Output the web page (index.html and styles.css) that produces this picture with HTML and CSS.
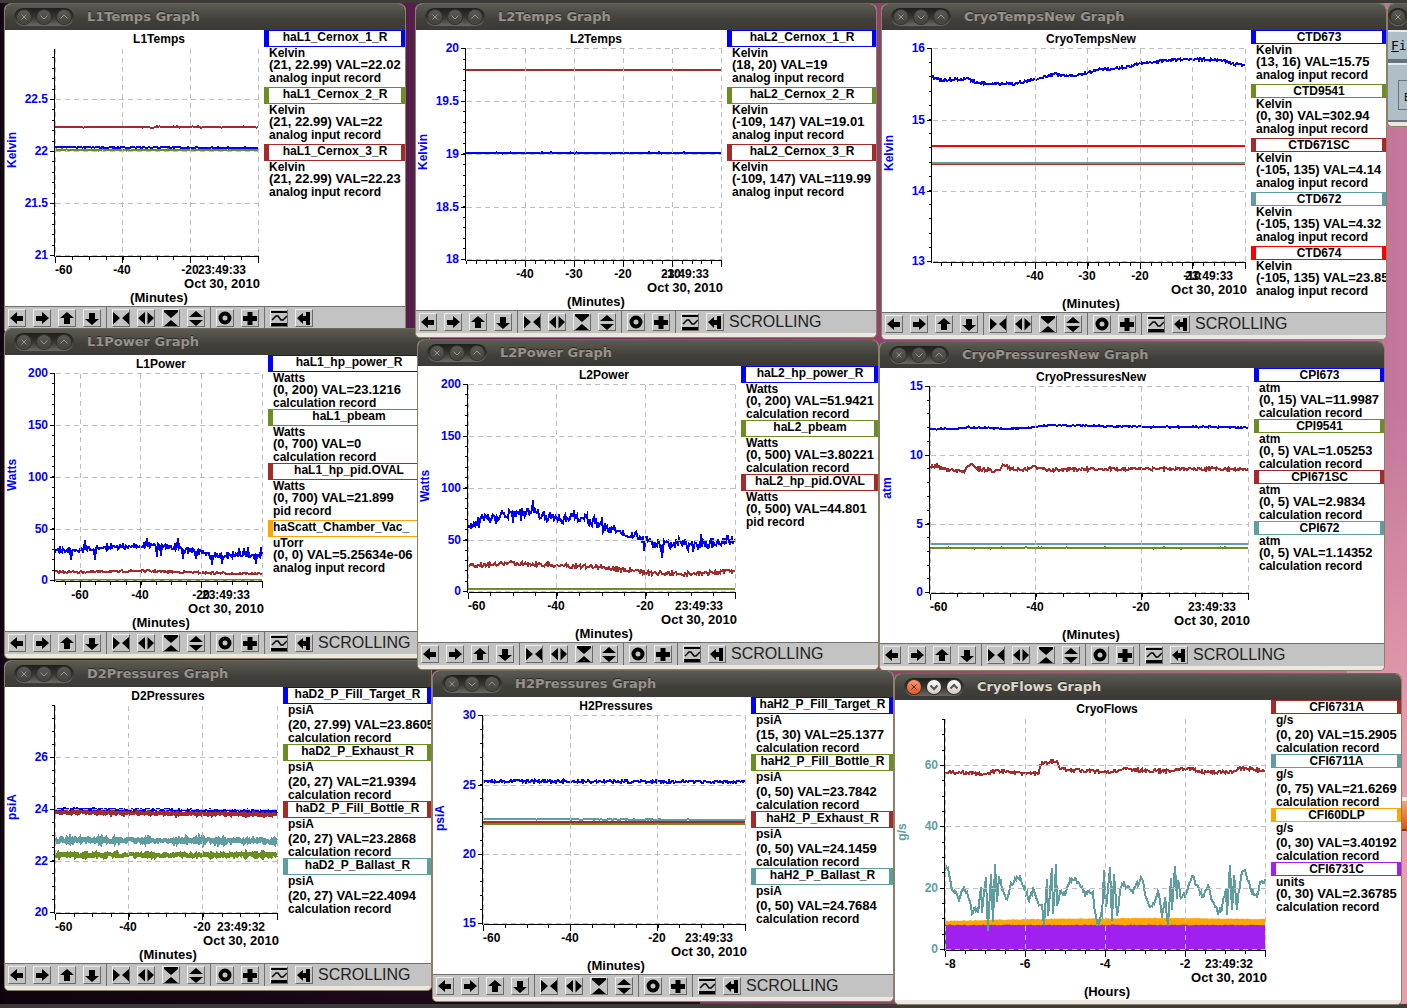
FILE: index.html
```html
<!DOCTYPE html>
<html lang="en">
<head>
<meta charset="utf-8">
<title>Cryo target strip charts</title>
<link rel="stylesheet" href="styles.css">
</head>
<body>
<svg class="sprite" aria-hidden="true">
  <symbol id="i-left" viewBox="1 1 16 16"><path d="M2 9L9 3V7H15V12H9V15Z"/></symbol>
  <symbol id="i-right" viewBox="1 1 16 16"><path d="M16 9L9 3V7H3V12H9V15Z"/></symbol>
  <symbol id="i-up" viewBox="1 1 16 16"><path d="M9 3L16 9H12V15H6V9H2Z"/></symbol>
  <symbol id="i-down" viewBox="1 1 16 16"><path d="M9 16L16 10H12V4H6V10H2Z"/></symbol>
  <symbol id="i-hin" viewBox="1 1 16 16"><path d="M1 3V15.500L8 9ZM17 3V15.500L10 9Z"/></symbol>
  <symbol id="i-hout" viewBox="1 1 16 16"><path d="M8 3V15.500L1 9ZM10.500 3V15.500L17 9Z"/></symbol>
  <symbol id="i-vin" viewBox="1 1 16 16"><path d="M2 1H16V3L9 9L2 3ZM2 17L9 11L16 17Z"/></symbol>
  <symbol id="i-vout" viewBox="1 1 16 16"><path d="M9 2L16 8H2ZM2 11H16L9 17Z"/></symbol>
  <symbol id="i-ring" viewBox="1 1 16 16"><circle cx="9" cy="9" r="4.500" fill="none" stroke="#000" stroke-width="4"/></symbol>
  <symbol id="i-plus" viewBox="1 1 16 16"><path d="M6.500 3h5v4h4.500v5h-4.500v4h-5v-4H2V7h4.500Z"/></symbol>
  <symbol id="i-wave" viewBox="1 1 16 16"><path d="M1 2H17V4H1ZM1 14H17V17H1Z"/><path d="M2 11L6 7H8L11 11H13L17 7" fill="none" stroke="#000" stroke-width="1.500"/></symbol>
  <symbol id="i-end" viewBox="1 1 16 16"><path d="M2 9L8 4V7H11V3H15V16H11V12H8V15Z"/></symbol>
  <symbol id="w-close" viewBox="0 0 14 14"><path d="M4.500 4.500L9.500 9.500M9.500 4.500L4.500 9.500"/></symbol>
  <symbol id="w-min" viewBox="0 0 14 14"><path d="M3.500 5.500L7 9L10.500 5.500"/></symbol>
  <symbol id="w-max" viewBox="0 0 14 14"><path d="M3.500 8.500L7 5L10.500 8.500"/></symbol>
</svg>
<main class="desktop" id="desktop">
  <div class="panel panel-top"></div>
  <div class="panel panel-bottom"></div>
  <div class="launcher"></div>
  <section class="window side">
    <header class="titlebar">
      <div class="controls">
        <button class="ctl" type="button" aria-label="Close"><svg><use href="#w-close"/></svg></button>
      </div>
    </header>
    <div class="menubar"><u>F</u>i</div>
    <div class="sidebody"><button class="sidebtn" type="button">E</button></div>
  </section>
</main>
<script src="charts.js"></script>
</body>
</html>
```
FILE: styles.css
```css
* { box-sizing: border-box; }

body {
  margin: 0;
  overflow: hidden;
  font: bold 12px/13px "Liberation Sans", Arial, sans-serif;
  color: #000;
}

.sprite { position: absolute; width: 0; height: 0; }

.desktop {
  position: relative;
  min-height: 100vh;
  overflow: hidden;
  background:
    linear-gradient(180deg, transparent 70%, rgba(10, 2, 10, 0.8) 100%) 0 0 / 700px 100% no-repeat,
    linear-gradient(180deg, transparent 40%, rgba(245, 175, 180, 0.7) 75%) 100% 0 / 60px 100% no-repeat,
    linear-gradient(90deg, #0d040c 0, #1d0a1c 5px, #561f4b 410px, #8c4468 880px, #c5789c 100%);
}

.panel { position: absolute; left: 0; right: 0; background: #3c3b37; }
.panel-top { top: 0; height: 3px; }
.panel-bottom { bottom: 0; height: 4px; }

.launcher {
  position: absolute;
  right: 0;
  top: 797px;
  width: 8px;
  height: 34px;
  border-top: 4px solid #f3eeee;
  border-bottom: 2px solid #8a3208;
  background: linear-gradient(#f0a878, #dd5310);
}

.window {
  position: absolute;
  border: 1px solid #8a8068;
  border-top-color: #6b685d;
  border-radius: 7px 7px 5px 5px;
  background: #ece8df;
  padding-bottom: 4px;
  overflow: hidden;
}

.l1temps { left: 4px; top: 3px; width: 402px; }
.l2temps { left: 415px; top: 3px; width: 462px; }
.cryotemps { left: 881px; top: 3px; width: 506px; }
.l1power { left: 4px; top: 328px; width: 426px; }
.l2power { left: 417px; top: 339px; width: 462px; }
.cryopress { left: 879px; top: 341px; width: 506px; }
.d2press { left: 4px; top: 660px; width: 428px; }
.h2press { left: 432px; top: 670px; width: 462px; }
.cryoflows { left: 894px; top: 673px; width: 508px; }
.side { left: 1387px; top: 3px; width: 200px; }

.titlebar {
  display: flex;
  align-items: center;
  gap: 13px;
  height: 26px;
  padding-left: 9px;
  background: linear-gradient(#5c5b53, #403f3a 60%, #3b3a36);
}

.side .titlebar { padding-left: 0; }

.title {
  margin: 0;
  font: bold 13px/18px "DejaVu Sans", sans-serif;
  color: #97928a;
  text-shadow: 0 -1px #2a2926;
  white-space: nowrap;
}

.controls {
  display: flex;
  flex: none;
  align-items: center;
  gap: 6px;
  height: 18px;
  padding: 0 3px;
  border-radius: 9px;
  background: linear-gradient(#1f1e1c, #35342f 50%, #6b6a62);
}

.ctl {
  width: 14px;
  height: 14px;
  padding: 0;
  border: 0;
  border-radius: 7px;
  background: linear-gradient(#5b5a54, #43423d);
  box-shadow: 0 0 0 1px #33322e;
}

.ctl svg { display: block; width: 14px; height: 14px; fill: none; stroke: #9a968c; }

.active .title { color: #dfd8c8; }
.active .ctl { background: linear-gradient(#ffffff, #cfcbc2); }
.active .ctl svg { stroke: #55534c; stroke-width: 2; }
.active .ctl:first-child { background: linear-gradient(#f79a72, #e2582a); }
.active .ctl:first-child svg { stroke: #5a2410; stroke-width: 1; }

.content { display: flex; background: #fff; }

.chart { display: block; flex: 1; min-width: 0; height: auto; }
.chart text { font: bold 12px "Liberation Sans", Arial, sans-serif; }
.chart .wide { font-size: 13px; }
.grid { fill: none; stroke: #bebebe; stroke-dasharray: 5 4; shape-rendering: crispEdges; }
.axis { fill: none; stroke: #000; shape-rendering: crispEdges; }
.trace { fill: none; stroke-width: 2; shape-rendering: crispEdges; }
.thick { stroke-width: 4; }

.legend { flex: none; margin: 0; padding: 0; list-style: none; overflow: hidden; white-space: nowrap; }
.w130 { width: 130px; }
.w135 { width: 135px; }
.w137 { width: 137px; }
.w141 { width: 141px; }
.w142 { width: 142px; }
.w148 { width: 148px; }
.w149 { width: 149px; }
.w161 { width: 161px; }

.entry { padding-bottom: 1px; }

.name {
  border: 1px solid;
  border-left-width: 5px;
  border-right-width: 4px;
  text-align: center;
}

.name.start { text-align: left; }
.name span { color: #000; }
.line { height: 11px; padding-left: 5px; }
.name.line { height: 14px; padding-left: 0; }
.line.deep { height: 14px; }
.name.line.deep { height: 17px; }
.line.value { font-size: 13px; }

.blue { border-color: #0000ff; stroke: #0000ff; }
.olive { border-color: #6b8e23; stroke: #6b8e23; }
.brown { border-color: #a52a2a; stroke: #a52a2a; }
.teal { border-color: #5f9ea0; stroke: #5f9ea0; }
.red { border-color: #ff0000; stroke: #ff0000; }
.orange { border-color: #ffa500; stroke: #ffa500; }
.purple { border-color: #a020f0; stroke: #a020f0; }

.toolbar {
  display: flex;
  align-items: center;
  gap: 5px;
  height: 23px;
  padding-left: 3px;
  border-top: 1px solid #6f6f6f;
  background: #c3c3c3;
}

.group { display: flex; gap: 7px; }
.sep { width: 1px; height: 100%; background: #6f6f6f; }

.tool {
  width: 18px;
  height: 18px;
  padding: 0;
  border: 1px solid;
  border-color: #eeeeee #6a6a6a #6a6a6a #eeeeee;
  background: #c3c3c3;
}

.tool svg { display: block; width: 16px; height: 16px; }
.mode { font-size: 16px; font-weight: normal; line-height: 18px; color: #222; }

.menubar {
  height: 33px;
  padding: 7px 3px;
  border-top: 2px solid #e4ebee;
  border-bottom: 4px solid #66737c;
  background: #aebfc8;
  font: 13px/14px "DejaVu Sans Mono", monospace;
}

.sidebody {
  height: 59px;
  padding: 15px 10px;
  border-top: 2px solid #e4ebee;
  border-bottom: 2px solid #66737c;
  background: #aebfc8;
}

.sidebtn {
  width: 60px;
  height: 30px;
  padding: 6px 5px 0;
  border: 1px solid #66737c;
  background: #aebfc8;
  font: 10px/12px "DejaVu Sans Mono", monospace;
  text-align: left;
}
```
FILE: charts.js
```js
// Each chart is drawn in desktop coordinates; "view" is the part of the desktop it covers.
// x / y: major ticks as [position, label]; xm / ym: minor ticks per major step.
// traces: [color, jitter, points, spike height, extra class].
const charts = [
  {
    id: 'l1temps', name: 'L1Temps', view: [5, 30, 259, 276], plot: [55, 48, 258, 256],
    unit: 'Kelvin', time: '23:49:33', span: '(Minutes)', mode: '', legend: 'w141',
    x: [[55, '-60'], [122, '-40'], [190, '-20'], [258, '']], xm: 4,
    y: [[99, '22.5'], [151, '22'], [203, '21.5'], [255, '21']], ym: 5,
    traces: [['brown', 0.6, '55 127 258 127'], ['olive', 0.6, '55 150 258 150'], ['blue', 0.6, '55 147 258 148']],
    entries: [['blue', 'haL1_Cernox_1_R', 'Kelvin', '(21, 22.99) VAL=22.02', 'analog input record'],
      ['olive', 'haL1_Cernox_2_R', 'Kelvin', '(21, 22.99) VAL=22', 'analog input record'],
      ['brown', 'haL1_Cernox_3_R', 'Kelvin', '(21, 22.99) VAL=22.23', 'analog input record']]
  },
  {
    id: 'l1power', name: 'L1Power', view: [5, 355, 263, 276], plot: [55, 373, 262, 581],
    unit: 'Watts', time: '23:49:33', span: '(Minutes)', mode: 'SCROLLING', legend: 'w161',
    x: [[80, '-60'], [140, '-40'], [201, '-20'], [262, '']], xm: 4,
    y: [[373, '200'], [425, '150'], [477, '100'], [529, '50'], [580, '0']], ym: 5,
    traces: [['olive', 0, '55 580 262 580'],
      ['brown', 1, '55 572 85 572 140 571 180 572 215 573 262 574'],
      ['blue', 2, '55 551 85 549 100 548 123 547 153 545 170 547 193 551 213 555 262 556', 11]],
    entries: [['blue', 'haL1_hp_power_R', 'Watts', '(0, 200) VAL=23.1216', 'calculation record'],
      ['olive', 'haL1_pbeam', 'Watts', '(0, 700) VAL=0', 'calculation record'],
      ['brown', 'haL1_hp_pid.OVAL', 'Watts', '(0, 700) VAL=21.899', 'pid record'],
      ['orange', 'haScatt_Chamber_Vac_', 'uTorr', '(0, 0) VAL=5.25634e-06', 'analog input record', 'start']]
  },
  {
    id: 'l2temps', name: 'L2Temps', view: [416, 30, 311, 280], plot: [466, 48, 721, 260],
    unit: 'Kelvin', time: '23:49:33', span: '(Minutes)', mode: 'SCROLLING', legend: 'w149',
    x: [[525, '-40'], [574, '-30'], [623, '-20'], [672, '-10'], [721, '']], xm: 5,
    y: [[48, '20'], [101, '19.5'], [154, '19'], [207, '18.5'], [259, '18']], ym: 5,
    traces: [['brown', 0, '466 70 721 70'], ['olive', 0.5, '494 153 721 153'], ['blue', 0.6, '466 153 721 153']],
    entries: [['blue', 'haL2_Cernox_1_R', 'Kelvin', '(18, 20) VAL=19', 'analog input record'],
      ['olive', 'haL2_Cernox_2_R', 'Kelvin', '(-109, 147) VAL=19.01', 'analog input record'],
      ['brown', 'haL2_Cernox_3_R', 'Kelvin', '(-109, 147) VAL=119.99', 'analog input record']]
  },
  {
    id: 'd2press', name: 'D2Pressures', view: [5, 687, 278, 276], plot: [55, 705, 277, 913],
    unit: 'psiA', time: '23:49:32', span: '(Minutes)', mode: 'SCROLLING', legend: 'w148',
    x: [[55, '-60'], [128, '-40'], [202, '-20'], [277, '']], xm: 4,
    y: [[757, '26'], [809, '24'], [861, '22'], [912, '20']], ym: 4,
    traces: [['brown', 1.2, '55 812 277 814', 0, 'thick'], ['blue', 1, '55 809 277 811'],
      ['teal', 1.8, '55 840 277 841', 0, 'thick'], ['olive', 1.4, '55 855 277 855', 0, 'thick']],
    entries: [['blue', 'haD2_P_Fill_Target_R', 'psiA', '(20, 27.99) VAL=23.8605', 'calculation record'],
      ['olive', 'haD2_P_Exhaust_R', 'psiA', '(20, 27) VAL=21.9394', 'calculation record'],
      ['brown', 'haD2_P_Fill_Bottle_R', 'psiA', '(20, 27) VAL=23.2868', 'calculation record'],
      ['teal', 'haD2_P_Ballast_R', 'psiA', '(20, 27) VAL=22.4094', 'calculation record']]
  },
  {
    id: 'l2power', name: 'L2Power', view: [418, 366, 323, 276], plot: [468, 384, 735, 592],
    unit: 'Watts', time: '23:49:33', span: '(Minutes)', mode: 'SCROLLING', legend: 'w137',
    x: [[468, '-60'], [556, '-40'], [645, '-20'], [735, '']], xm: 4,
    y: [[384, '200'], [436, '150'], [488, '100'], [540, '50'], [591, '0']], ym: 5,
    traces: [['olive', 0, '468 589 735 589'],
      ['brown', 2, '468 566 513 563 550 565 600 567 650 573 690 574 735 571'],
      ['blue', 5, '468 525 482 520 497 518 513 512 532 513 533 496 534 513 553 518 590 520 603 527 627 532 643 540 657 545 697 545 735 539', 8]],
    entries: [['blue', 'haL2_hp_power_R', 'Watts', '(0, 200) VAL=51.9421', 'calculation record'],
      ['olive', 'haL2_pbeam', 'Watts', '(0, 500) VAL=3.80221', 'calculation record'],
      ['brown', 'haL2_hp_pid.OVAL', 'Watts', '(0, 500) VAL=44.801', 'pid record']]
  },
  {
    id: 'cryotemps', name: 'CryoTempsNew', view: [882, 30, 369, 282], plot: [932, 48, 1245, 262],
    unit: 'Kelvin', time: '23:49:33', span: '(Minutes)', mode: 'SCROLLING', legend: 'w135',
    x: [[1035, '-40'], [1087, '-30'], [1140, '-20'], [1192, '-10'], [1245, '']], xm: 5,
    y: [[48, '16'], [120, '15'], [191, '14'], [261, '13']], ym: 5,
    traces: [['red', 0, '932 146 1245 146'], ['brown', 0, '932 164 1245 164'], ['teal', 0, '932 163 1245 163'],
      ['blue', 1.3, '932 77 940 80 969 79 977 83 1012 84 1031 80 1055 74 1067 76 1082 74 1101 69 1113 69 1131 66 1140 63 1163 61 1184 59 1224 60 1231 64 1245 65']],
    entries: [['blue', 'CTD673', 'Kelvin', '(13, 16) VAL=15.75', 'analog input record'],
      ['olive', 'CTD9541', 'Kelvin', '(0, 30) VAL=302.94', 'analog input record'],
      ['brown', 'CTD671SC', 'Kelvin', '(-105, 135) VAL=4.14', 'analog input record'],
      ['teal', 'CTD672', 'Kelvin', '(-105, 135) VAL=4.32', 'analog input record'],
      ['red', 'CTD674', 'Kelvin', '(-105, 135) VAL=23.85', 'analog input record']]
  },
  {
    id: 'cryopress', name: 'CryoPressuresNew', view: [880, 368, 374, 275], plot: [930, 386, 1248, 593],
    unit: 'atm', time: '23:49:33', span: '(Minutes)', mode: 'SCROLLING', legend: 'w130',
    x: [[930, '-60'], [1035, '-40'], [1141, '-20'], [1248, '']], xm: 4,
    y: [[386, '15'], [455, '10'], [524, '5'], [592, '0']], ym: 5,
    traces: [['olive', 0.6, '930 548 1248 548'], ['teal', 0.3, '930 544 1248 544'],
      ['brown', 1.6, '930 467 938 466 946 470 964 471 970 464 978 469 997 471 1004 465 1012 469 1024 470 1033 467 1048 470 1100 469 1248 469'],
      ['blue', 0.7, '930 429 958 429 967 427 1010 429 1035 427 1051 425 1100 426 1150 427 1225 427 1248 428']],
    entries: [['blue', 'CPI673', 'atm', '(0, 15) VAL=11.9987', 'calculation record'],
      ['olive', 'CPI9541', 'atm', '(0, 5) VAL=1.05253', 'calculation record'],
      ['brown', 'CPI671SC', 'atm', '(0, 5) VAL=2.9834', 'calculation record'],
      ['teal', 'CPI672', 'atm', '(0, 5) VAL=1.14352', 'calculation record']]
  },
  {
    id: 'h2press', name: 'H2Pressures', view: [433, 697, 318, 277], plot: [483, 715, 745, 924],
    unit: 'psiA', time: '23:49:33', span: '(Minutes)', mode: 'SCROLLING', legend: 'w142',
    x: [[483, '-60'], [570, '-40'], [657, '-20'], [745, '']], xm: 4,
    y: [[715, '30'], [785, '25'], [854, '20'], [923, '15']], ym: 5,
    traces: [['olive', 0.4, '483 824 745 824'], ['teal', 0.4, '483 819 745 820'], ['brown', 0, '483 822 745 822'],
      ['blue', 1.4, '483 781 745 782']],
    entries: [['blue', 'haH2_P_Fill_Target_R', 'psiA', '(15, 30) VAL=25.1377', 'calculation record'],
      ['olive', 'haH2_P_Fill_Bottle_R', 'psiA', '(0, 50) VAL=23.7842', 'calculation record'],
      ['brown', 'haH2_P_Exhaust_R', 'psiA', '(0, 50) VAL=24.1459', 'calculation record'],
      ['teal', 'haH2_P_Ballast_R', 'psiA', '(0, 50) VAL=24.7684', 'calculation record']]
  },
  {
    id: 'cryoflows', name: 'CryoFlows', active: true, view: [895, 700, 376, 300], plot: [945, 718, 1265, 950],
    unit: 'g/s', time: '23:49:32', span: '(Hours)', mode: null, legend: 'w130', ink: '#5f9ea0',
    x: [[945, '-8'], [1025, '-6'], [1105, '-4'], [1185, '-2'], [1265, '']], xm: 4,
    y: [[765, '60'], [826, '40'], [888, '20'], [949, '0']], ym: 4,
    fills: [['#ffa500', '945 921 985 920 1040 919 1150 918 1265 919'], ['#a020f0', '945 925 1265 925']],
    traces: [
      ['brown', 1.6, '945 772 985 774 995 771 1018 773 1039 773 1040 764 1051 761 1058 762 1060 769 1085 771 1112 772 1123 769 1152 771 1172 771 1185 768 1205 772 1232 772 1242 768 1265 771'],
      ['teal', 3, '945 868 948 867 952 887 959 900 963 887 968 895 972 912 977 907 978 915 981 885 982 912 986 880 988 928 991 877 993 920 995 867 997 902 999 878 1002 887 1007 900 1011 885 1018 875 1023 883 1027 895 1030 900 1033 888 1039 907 1042 903 1044 925 1047 878 1048 918 1052 868 1053 913 1056 865 1057 908 1060 892 1065 895 1072 877 1080 883 1085 893 1093 893 1095 915 1098 923 1102 915 1104 872 1106 908 1110 867 1112 923 1114 872 1117 917 1120 892 1123 883 1132 892 1142 877 1147 902 1150 907 1154 903 1159 892 1162 918 1165 898 1168 927 1171 878 1172 913 1175 863 1177 898 1178 878 1181 900 1187 892 1192 875 1197 887 1203 898 1208 887 1213 902 1218 912 1222 907 1226 888 1227 913 1230 865 1232 913 1234 877 1237 907 1238 895 1242 872 1246 872 1250 888 1256 897 1260 885 1265 879']],
    entries: [['brown', 'CFI6731A', 'g/s', '(0, 20) VAL=15.2905', 'calculation record'],
      ['teal', 'CFI6711A', 'g/s', '(0, 75) VAL=21.6269', 'calculation record'],
      ['orange', 'CFI60DLP', 'g/s', '(0, 30) VAL=3.40192', 'calculation record'],
      ['purple', 'CFI6731C', 'units', '(0, 30) VAL=2.36785', 'calculation record']]
  }
];

const tools = [
  [['left', 'Scroll left'], ['right', 'Scroll right'], ['up', 'Scroll up'], ['down', 'Scroll down']],
  [['hin', 'Shrink time'], ['hout', 'Expand time'], ['vin', 'Shrink range'], ['vout', 'Expand range']],
  [['ring', 'Reset'], ['plus', 'Refresh']],
  [['wave', 'Autoscale'], ['end', 'Jump to now']]
];

let seed = 7;
function random() {
  seed = (seed * 16807) % 2147483647;
  return seed / 2147483647;
}

function pairs(text) {
  const n = text.split(' ').map(Number);
  return n.reduce((out, v, i) => (i % 2 ? out : [...out, [v, n[i + 1]]]), []);
}

// One sample for each pixel column, with jitter and occasional spikes.
function sample(text, jitter, spike) {
  const p = pairs(text);
  const out = [];
  for (let i = 0; i < p.length - 1; i++) {
    const [x0, y0] = p[i];
    const [x1, y1] = p[i + 1];
    for (let x = x0; x < x1; x++) {
      let y = y0 + (y1 - y0) * (x - x0) / (x1 - x0) + (random() - 0.5) * 2 * jitter;
      if (spike && random() < 0.16) y += (random() - 0.5) * 2 * spike;
      out.push(x + ',' + y.toFixed(1));
    }
  }
  out.push(p[p.length - 1].join(','));
  return out.join(' ');
}

// Minor tick positions, continued from the major ticks to both plot ends.
function minors(major, per, from, to) {
  const step = (major[major.length - 1][0] - major[0][0]) / (major.length - 1) / per;
  const out = [];
  for (let v = major[major.length - 1][0]; v >= from; v -= step) if (v <= to) out.push(Math.round(v));
  return out;
}

function chart(c) {
  const [l, t, r, b] = c.plot;
  const [vx, vy] = c.view;
  const ink = c.ink || '#0000ff';
  const mid = Math.round((l + r) / 2) + 2;
  const grid = c.x.map(([x]) => `M${x} ${t}V${b}`).join('') + c.y.map(([y]) => `M${l} ${y}H${r}`).join('');
  const axis = `M${l - 1} ${t}V${b}M${l} ${b}H${r}` +
    c.y.map(([y]) => `M${l - 6} ${y}h5`).join('') +
    minors(c.y, c.ym, t, b).map(y => `M${l - 4} ${y}h3`).join('') +
    c.x.map(([x]) => `M${x} ${b}v6`).join('') +
    minors(c.x, c.xm, l, r).map(x => `M${x} ${b}v3`).join('');
  const fills = (c.fills || []).map(([color, p]) => `<polygon fill="${color}" points="${sample(p, 0.5)} ${r},${b} ${l},${b}"/>`).join('');
  const traces = c.traces.map(([k, j, p, s, extra]) => `<polyline class="trace ${k} ${extra || ''}" points="${sample(p, j, s)}"/>`).join('');
  const xl = c.x.filter(v => v[1]).map(([x, s]) => `<text x="${x}" y="${b + 18}" text-anchor="${x === l ? 'start' : 'middle'}">${s}</text>`).join('');
  const yl = c.y.map(([y, s]) => `<text x="${l - 7}" y="${y + 4}" text-anchor="end" fill="${ink}">${s}</text>`).join('');
  const ly = Math.round((t + b) / 2) - 2;
  return `<svg class="chart" viewBox="${c.view.join(' ')}" role="img" aria-label="${c.name} chart">
    ${fills}${traces}
    <g transform="translate(.5 .5)"><path class="grid" d="${grid}"/><path class="axis" d="${axis}"/></g>
    <text x="${mid}" y="${vy + 13}" text-anchor="middle">${c.name}</text>${xl}${yl}
    <text x="${r - 36}" y="${b + 18}" text-anchor="middle">${c.time}</text>
    <text class="wide" x="${r - 36}" y="${b + 32}" text-anchor="middle">Oct 30, 2010</text>
    <text class="wide" x="${mid}" y="${b + 46}" text-anchor="middle">${c.span}</text>
    <text transform="translate(${vx + 11} ${ly}) rotate(-90)" text-anchor="middle" fill="${ink}">${c.unit}</text>
  </svg>`;
}

const deep = s => (/[gjpqy_(),]/.test(s) ? ' deep' : '');

function entry([color, name, unit, value, record, align]) {
  return `<li class="entry"><div class="name line ${color}${deep(name)} ${align || ''}"><span>${name}</span></div>` +
    `<div class="line${deep(unit)}">${unit}</div><div class="line value deep">${value}</div>` +
    `<div class="line${deep(record)}">${record}</div></li>`;
}

function toolbar(mode) {
  const groups = tools.map(g => '<div class="group">' + g.map(([icon, label]) =>
    `<button class="tool" type="button" aria-label="${label}"><svg><use href="#i-${icon}"/></svg></button>`).join('') + '</div>');
  return `<div class="toolbar">${groups.join('<span class="sep"></span>')}<span class="mode">${mode}</span></div>`;
}

const control = (icon, label) => `<button class="ctl" type="button" aria-label="${label}"><svg><use href="#w-${icon}"/></svg></button>`;

document.getElementById('desktop').insertAdjacentHTML('beforeend', charts.map(c => `
  <section class="window ${c.id}${c.active ? ' active' : ''}">
    <header class="titlebar">
      <div class="controls">${control('close', 'Close')}${control('min', 'Minimize')}${control('max', 'Maximize')}</div>
      <h2 class="title">${c.name} Graph</h2>
    </header>
    <div class="content">${chart(c)}<ul class="legend ${c.legend}">${c.entries.map(entry).join('')}</ul></div>
    ${c.mode === null ? '' : toolbar(c.mode)}
  </section>`).join(''));
```
